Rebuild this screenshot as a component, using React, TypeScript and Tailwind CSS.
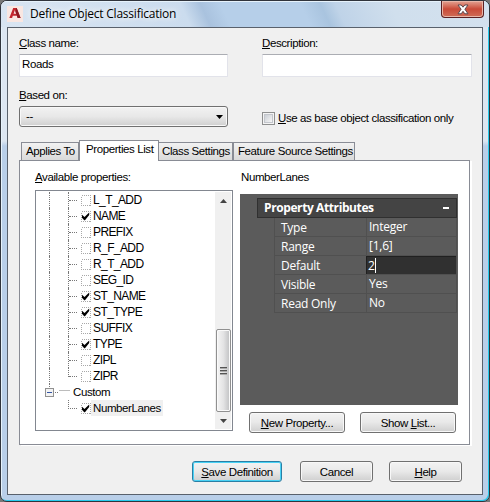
import type { ReactNode } from "react";

const properties = [
  { name: "L_T_ADD", checked: false },
  { name: "NAME", checked: true },
  { name: "PREFIX", checked: false },
  { name: "R_F_ADD", checked: false },
  { name: "R_T_ADD", checked: false },
  { name: "SEG_ID", checked: false },
  { name: "ST_NAME", checked: true },
  { name: "ST_TYPE", checked: true },
  { name: "SUFFIX", checked: false },
  { name: "TYPE", checked: true },
  { name: "ZIPL", checked: false },
  { name: "ZIPR", checked: false },
];

const attributes = [
  { name: "Type", value: "Integer" },
  { name: "Range", value: "[1,6]" },
  { name: "Default", value: "2", editing: true },
  { name: "Visible", value: "Yes" },
  { name: "Read Only", value: "No" },
];

function TreeCheck({ checked }: { checked: boolean }) {
  return (
    <svg width="10" height="11" viewBox="0 0 10 11" className="shrink-0">
      <rect x="0.5" y="0.5" width="9" height="10" fill="none" stroke="#a8a8a8" strokeDasharray="1 1" shapeRendering="crispEdges" />
      {checked && <path d="M1 3.8 L3.5 6 L8.2 1.4 V4 L4 9.2 H3.2 L1 6.8 Z" fill="#000" />}
    </svg>
  );
}

function TreeItem({ name, checked, last }: { name: string; checked: boolean; last?: boolean }) {
  return (
    <div className="flex h-4 items-center">
      <div className="ml-[13px] h-4 w-[19px] border-l border-dotted border-[#777]" />
      <div className="flex h-4 w-[13px]">
        <div className={`w-px border-l border-dotted border-[#777] ${last ? "h-[9px]" : "h-4"}`} />
        <div className="mt-2 h-px w-[8px] border-t border-dotted border-[#777]" />
      </div>
      <TreeCheck checked={checked} />
      <span className="ml-[2px] text-[12px] leading-4 tracking-[-0.6px]">{name}</span>
    </div>
  );
}

function Button({ children, className }: { children: ReactNode; className: string }) {
  return (
    <button
      className={`h-[21px] rounded-[3px] border bg-linear-to-b from-[#f3f3f3] from-0% via-[#e9e9e9] via-48% to-[#cfcfcf] text-center leading-[18px] tracking-[-0.4px] ${className}`}
    >
      {children}
    </button>
  );
}

function Field({ label, children }: { label: ReactNode; children: ReactNode }) {
  return (
    <div>
      <div className="h-[19px] leading-[17px]">{label}</div>
      {children}
    </div>
  );
}

function PropertyGrid() {
  return (
    <div className="h-[211px] w-[218px] bg-[#5b5b5b] pt-1 pl-[17px] font-['Open_Sans','Noto_Sans',sans-serif] text-[12px] tracking-[-0.25px] text-white">
      <div className="flex h-5 w-[200px] items-center justify-between border border-[#303030] bg-[#444] pr-[7px] pl-[6px]">
        <span className="text-[12px] leading-[18px] font-bold tracking-[-0.4px]">Property Attributes</span>
        <span className="h-[2px] w-[6px] bg-white" />
      </div>
      <div className="ml-[17px] w-[183px] border-l border-[#505050]">
        {attributes.map((row) => (
          <div key={row.name} className="flex h-[19px] border-r border-b border-[#505050] leading-[19px]">
            <div className="w-[91px] pl-[6px]">{row.name}</div>
            <div
              className={
                row.editing
                  ? "flex flex-1 items-center border-t border-l border-[#202020] bg-[#303030] pl-px"
                  : "flex flex-1 items-center border-l border-[#505050] pb-[2px] pl-[2px]"
              }
            >
              {row.value}
              {row.editing && <span className="h-[15px] w-px bg-white" />}
            </div>
          </div>
        ))}
      </div>
    </div>
  );
}

function Scrollbar() {
  return (
    <div className="flex h-full w-[16px] flex-col items-center bg-[#f0f0f0]">
      <div className="flex h-[17px] items-center">
        <svg width="7" height="4" viewBox="0 0 7 4"><path d="M0 4 L3.5 0 L7 4Z" fill="#444" /></svg>
      </div>
      <div className="mt-[120px] flex h-[83px] w-[15px] flex-col items-center justify-center gap-px rounded-[2px] border border-[#909090] bg-linear-to-r from-[#f5f5f5] via-[#e3e3e4] to-[#bfc0c2] shadow-[inset_0_0_0_1px_#fafafa]">
        <span className="h-px w-[7px] bg-[#555] shadow-[0_1px_0_#aaa]" />
        <span className="mt-px h-px w-[7px] bg-[#555] shadow-[0_1px_0_#aaa]" />
        <span className="mt-px h-px w-[7px] bg-[#555] shadow-[0_1px_0_#aaa]" />
      </div>
      <div className="flex h-[17px] items-center">
        <svg width="7" height="4" viewBox="0 0 7 4"><path d="M0 0 L3.5 4 L7 0Z" fill="#444" /></svg>
      </div>
    </div>
  );
}

function TitleBar() {
  return (
    <div className="flex h-[26px] items-start justify-between bg-[linear-gradient(65deg,#d9e5f2_0%,#cbdcee_38%,#a9c2de_42%,#b6cfe9_46%,#b6cfe9_62%,#a9c4df_66%,#bfd3e8_69%,#d0dfed_80%,#d4e1ee_100%)] pr-[5px] pl-[6px] shadow-[inset_0_1px_0_#e6f2fb]">
      <div className="flex items-center">
        <svg width="16" height="16" viewBox="0 0 16 16" className="mt-[3px]">
          <rect width="16" height="16" fill="#f9e7e2" />
          <path d="M2.3 12 L6.2 2 H9.7 L13.6 12 H10.7 L9.9 9.8 H5.8 L5.1 12Z M6.6 7.7 H9.2 L7.9 4.1Z" fill="#c3262e" fillRule="evenodd" />
          <path d="M9.2 2 H9.7 L13.6 12 H10.7 L8.5 5.8Z" fill="#8e1a22" />
        </svg>
        <h1 className="mt-[3px] ml-[7px] font-['Open_Sans','Noto_Sans',sans-serif] text-[12px] leading-[20px] tracking-[-0.22px] text-black [text-shadow:0_0_6px_#fff,0_0_8px_#fff]">
          Define Object Classification
        </h1>
      </div>
      <button className="flex h-[17px] w-[43px] items-center justify-center rounded-b-[4px] border border-t-0 border-[#5a2023] bg-linear-to-b from-[#e2a293] from-0% via-[#c94a38] via-50% to-[#cf6c57] shadow-[inset_0_0_0_1px_#e8b6a8]">
        <svg width="12" height="11" viewBox="0 0 12 11">
          <path d="M1 1 H4.2 L6 3.2 L7.8 1 H11 L7.9 5.2 L11 9.8 H7.8 L6 7.3 L4.2 9.8 H1 L4.1 5.2Z" fill="#fff" stroke="#59494f" />
        </svg>
      </button>
    </div>
  );
}

export default function App() {
  return (
    <div className="h-[502px] w-[490px] overflow-hidden bg-[#777] font-['Liberation_Sans',Arial,sans-serif] text-[11.5px] tracking-[-0.4px] text-black">
      <div className="h-[502px] w-[490px] overflow-hidden rounded-[7px] border border-[#30343c] bg-linear-to-b from-[#dce6f1] from-28% to-[#b9cfe9] to-29% shadow-[inset_-1px_-1px_0_#26cbed,inset_1px_1px_0_#e6f2fb]">
        <TitleBar />
        <main className="ml-[6px] h-[468px] w-[476px] border border-[#59616c] bg-[#f0f0f0] pt-[7px] pl-[11px]">
          <div className="flex gap-[34px]">
            <Field label={<><u>C</u>lass name:</>}>
              <div className="h-[23px] w-[209px] rounded-[1px] border border-[#e2e3ea] border-t-[#abadb3] bg-white pl-[2px] leading-[19px]">Roads</div>
            </Field>
            <Field label={<><u>D</u>escription:</>}>
              <div className="h-[23px] w-[210px] rounded-[1px] border border-[#e2e3ea] border-t-[#abadb3] bg-white" />
            </Field>
          </div>

          <div className="mt-[10px] flex gap-[34px]">
            <Field label={<><u>B</u>ased on:</>}>
              <div className="flex h-[21px] w-[209px] items-center justify-between rounded-[3px] border border-[#707070] bg-linear-to-b from-[#f2f2f2] from-0% via-[#e8e8e8] via-50% to-[#cfcfcf] pr-1 pl-[6px] shadow-[inset_0_0_0_1px_#f8f8f8]">
                <span>--</span>
                <svg width="7" height="4" viewBox="0 0 7 4"><path d="M0 0 H7 L3.5 4Z" fill="#000" /></svg>
              </div>
            </Field>
            <div className="mt-[25px] flex h-[13px] items-center">
              <div className="h-[13px] w-[13px] border border-[#8e8f8f] bg-[#f4f4f4] p-px">
                <div className="h-[9px] w-[9px] border border-[#c3c6cc] bg-linear-to-br from-[#cbcfd5] to-[#f6f6f6]" />
              </div>
              <span className="ml-[3px] pt-px whitespace-nowrap"><u>U</u>se as base object classification only</span>
            </div>
          </div>

          <div className="mt-[13px] flex h-5 items-end pl-[2px] leading-[17px] whitespace-nowrap">
            <div className="h-[18px] w-[58px] border border-b-0 border-[#898c95] bg-linear-to-b from-[#f2f2f2] to-[#dadada] pl-1">Applies To</div>
            <div className="z-10 -mb-px h-[21px] w-[80px] border border-b-0 border-[#898c95] bg-white pl-[6px]">Properties List</div>
            <div className="h-[18px] w-[74px] border border-b-0 border-l-0 border-[#898c95] bg-linear-to-b from-[#f2f2f2] to-[#dadada] pl-[3px]">Class Settings</div>
            <div className="h-[18px] w-[122px] border border-b-0 border-[#898c95] bg-linear-to-b from-[#f2f2f2] to-[#dadada] pl-[4px]">Feature Source Settings</div>
          </div>

          <section className="flex h-[285px] w-[451px] border border-[#898c95] bg-white pt-[9px] pl-[15px] shadow-[2px_1px_0_#fff]">
            <div>
              <div className="h-5 leading-[15px]"><u>A</u>vailable properties:</div>
              <div className="flex h-[241px] w-[198px] justify-between border border-[#828790] p-px pl-0">
                <div>
                  {properties.map((p, i) => (
                    <TreeItem key={p.name} {...p} last={i === properties.length - 1} />
                  ))}
                  <div className="flex h-4 items-center pl-[9px]">
                    <svg width="25" height="16" viewBox="0 0 25 16" shapeRendering="crispEdges">
                      <path d="M4.5 0 V5" stroke="#777" strokeDasharray="1 1" />
                      <rect x="0.5" y="4.5" width="8" height="8" rx="1" fill="#f3f3f3" stroke="#919191" />
                      <path d="M2 8.5 H7" stroke="#3355a5" />
                      <path d="M10 8.5 H14" stroke="#777" strokeDasharray="1 1" />
                      <path d="M14 6.5 H25" stroke="#bcbcbc" />
                    </svg>
                    <span className="ml-[3px] pt-px">Custom</span>
                  </div>
                  <div className="flex h-4 items-center pl-8">
                    <div className="mb-[7px] h-[9px] w-[9px] border-b border-l border-dotted border-[#777]" />
                    <div className="ml-1"><TreeCheck checked /></div>
                    <span className="bg-[#f0f0f0] px-[2px] leading-4">NumberLanes</span>
                  </div>
                </div>
                <Scrollbar />
              </div>
            </div>

            <div className="ml-[7px]">
              <div className="h-[24px] pl-px leading-[15px]">NumberLanes</div>
              <PropertyGrid />
              <div className="mt-[7px] ml-[9px] flex gap-[15px]">
                <Button className="w-[96px] border-[#707070] shadow-[inset_0_0_0_1px_#f8f8f8]"><u>N</u>ew Property...</Button>
                <Button className="w-[96px] border-[#707070] shadow-[inset_0_0_0_1px_#f8f8f8]">Show <u>L</u>ist...</Button>
              </div>
            </div>
          </section>

          <footer className="mt-4 ml-[173px] flex">
            <Button className="w-[90px] border-[#2a7fa5] shadow-[inset_0_0_0_1px_#49d2f5]"><u>S</u>ave Definition</Button>
            <Button className="ml-[18px] w-[73px] border-[#707070] shadow-[inset_0_0_0_1px_#f8f8f8]">Cancel</Button>
            <Button className="ml-4 w-[73px] border-[#707070] shadow-[inset_0_0_0_1px_#f8f8f8]"><u>H</u>elp</Button>
          </footer>
        </main>
      </div>
    </div>
  );
}
